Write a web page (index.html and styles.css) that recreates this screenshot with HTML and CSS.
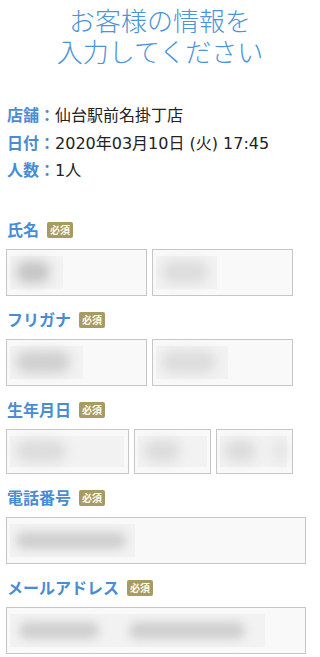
FILE: index.html
```html
<!DOCTYPE html>
<html lang="ja">
<head>
<meta charset="utf-8">
<title>お客様の情報を入力してください</title>
<link rel="stylesheet" href="styles.css">
</head>
<body>
<div class="page">
  <h1 class="title"><span class="title-line">お客様の情報を</span><span class="title-line">入力してください</span></h1>

  <div class="info">
    <div class="info-row"><span class="info-label">店舗：</span><span class="info-value">仙台駅前名掛丁店</span></div>
    <div class="info-row"><span class="info-label">日付：</span><span class="info-value">2020年03月10日 (火) 17:45</span></div>
    <div class="info-row"><span class="info-label">人数：</span><span class="info-value">1人</span></div>
  </div>

  <div class="section">
    <div class="label"><span class="label-text">氏名</span><span class="badge">必須</span></div>
    <div class="row">
      <div class="field f-half"><div class="ph w53"><span class="blob dark b34"></span></div></div>
      <div class="field f-half"><div class="ph w61"><span class="blob light b46"></span></div></div>
    </div>
  </div>

  <div class="section">
    <div class="label"><span class="label-text">フリガナ</span><span class="badge">必須</span></div>
    <div class="row">
      <div class="field f-half"><div class="ph w73"><span class="blob mid b54"></span></div></div>
      <div class="field f-half"><div class="ph w72"><span class="blob light b54"></span></div></div>
    </div>
  </div>

  <div class="section">
    <div class="label"><span class="label-text">生年月日</span><span class="badge">必須</span></div>
    <div class="row">
      <div class="field f-year short"><div class="ph w114"><span class="blob light b50"></span></div></div>
      <div class="field f-md short"><div class="ph w69"><span class="blob light b36"></span></div></div>
      <div class="field f-md short"><div class="ph w67 spread"><span class="blob light b32"></span><span class="blob faint b14"></span></div></div>
    </div>
  </div>

  <div class="section">
    <div class="label"><span class="label-text">電話番号</span><span class="badge">必須</span></div>
    <div class="row">
      <div class="field f-full"><div class="ph w125"><span class="blob mid b110 thin"></span></div></div>
    </div>
  </div>

  <div class="section">
    <div class="label"><span class="label-text">メールアドレス</span><span class="badge">必須</span></div>
    <div class="row">
      <div class="field f-full"><div class="ph w255 gap30"><span class="blob mid b80 thin"></span><span class="blob mid b116 thin"></span></div></div>
    </div>
  </div>
</div>
</body>
</html>
```

FILE: styles.css
```css
html, body {
  margin: 0;
  padding: 0;
  background: #ffffff;
}

body {
  font-family: "DejaVu Sans", "Noto Sans CJK JP", sans-serif;
  color: #222222;
  width: 320px;
  overflow: hidden;
}

.page {
  padding: 4px 6px 0 6px;
}

.title {
  margin: 0;
  font-family: "Noto Sans CJK JP", sans-serif;
  font-size: 26px;
  font-weight: 300;
  color: #4d93d9;
  text-align: center;
}

.title-line {
  display: block;
  height: 31px;
  line-height: 31px;
}

.info {
  margin-top: 35px;
  padding-left: 1px;
}

.info-row {
  font-size: 16px;
  line-height: 27.5px;
  height: 27.5px;
  white-space: nowrap;
}

.info-label {
  font-family: "Noto Sans CJK JP", sans-serif;
  color: #4a8cd4;
  font-weight: 700;
}

.info-value {
  color: #222222;
}

.section {
  margin-bottom: 13px;
}

.info + .section {
  margin-top: 35px;
}

.label {
  display: flex;
  align-items: center;
  height: 20px;
  margin-bottom: 10px;
  padding-left: 1px;
}

.label-text {
  font-family: "Noto Sans CJK JP", sans-serif;
  font-size: 16px;
  line-height: 20px;
  font-weight: 700;
  color: #4a8cd4;
}

.badge {
  font-family: "Noto Sans CJK JP", sans-serif;
  margin-left: 8px;
  margin-top: 3px;
  width: 26px;
  height: 16px;
  border-radius: 2px;
  background: #a79a63;
  color: #fffbe8;
  font-size: 10px;
  line-height: 16px;
  text-align: center;
  font-weight: 700;
}

.row {
  display: flex;
  gap: 5px;
}

.field {
  box-sizing: border-box;
  height: 47px;
  border: 1px solid #c6c6c6;
  background: #f9f9f9;
  padding: 6px 3px;
  display: flex;
  overflow: hidden;
}

.field.short {
  height: 45px;
}

.f-half { width: 141px; }
.f-year { width: 123px; }
.f-md { width: 77px; }
.f-full { width: 300px; }

.ph {
  box-sizing: border-box;
  height: 100%;
  background: #f2f2f2;
  display: flex;
  align-items: center;
  padding-left: 6px;
}

.ph.spread {
  justify-content: space-between;
  padding-left: 4px;
  padding-right: 0;
}

.ph.gap30 {
  gap: 30px;
  padding-left: 9px;
}

.w53 { width: 53px; }
.w61 { width: 61px; }
.w73 { width: 73px; }
.w72 { width: 72px; }
.w114 { width: 114px; }
.w69 { width: 69px; }
.w67 { width: 67px; }
.w125 { width: 125px; }
.w255 { width: 255px; }

.blob {
  display: block;
  height: 22px;
  border-radius: 11px;
  filter: blur(6px);
}

.blob.thin {
  height: 17px;
  border-radius: 9px;
  filter: blur(5px);
}

.blob.dark { background: #c4c4c4; }
.blob.mid { background: #cfcfcf; }
.blob.light { background: #dcdcdc; }
.blob.faint { background: #e4e4e4; }

.b14 { width: 14px; }
.b32 { width: 32px; }
.b34 { width: 34px; }
.b36 { width: 36px; }
.b46 { width: 46px; }
.b50 { width: 50px; }
.b54 { width: 54px; }
.b80 { width: 80px; }
.b110 { width: 110px; }
.b116 { width: 116px; }
```
